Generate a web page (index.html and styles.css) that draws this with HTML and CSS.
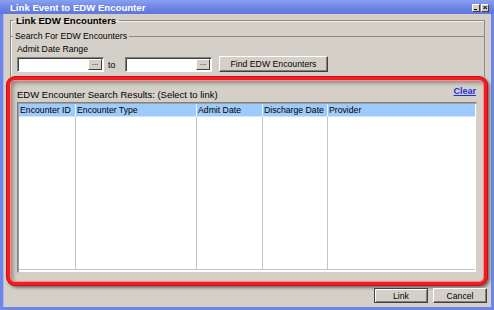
FILE: index.html
```html
<!DOCTYPE html>
<html lang="en">
<head>
  <meta charset="UTF-8" />
  <title>Link Event to EDW Encounter</title>
  <link rel="stylesheet" href="styles.css">
</head>
<body>
  <div class="window">
    <div class="titlebar">
      <span class="title">Link Event to EDW Encounter</span>
      <div class="title-btns">
        <span class="tbtn min"></span>
        <span class="tbtn close">&#215;</span>
      </div>
    </div>

    <fieldset class="group">
      <legend class="group-title">Link EDW Encounters</legend>
      <fieldset class="subgroup">
        <legend>Search For EDW Encounters</legend>
        <div class="field-label">Admit Date Range</div>
        <div class="search-row">
          <div class="date-input"><span class="dots">...</span></div>
          <span class="to">to</span>
          <div class="date-input"><span class="dots">...</span></div>
          <button class="btn find">Find EDW Encounters</button>
        </div>
      </fieldset>
    </fieldset>

    <div class="results">
      <div class="results-head">
        <span class="results-label">EDW Encounter Search Results: (Select to link)</span>
        <a class="clear" href="#">Clear</a>
      </div>
      <div class="grid">
        <div class="th">Encounter ID</div>
        <div class="th">Encounter Type</div>
        <div class="th">Admit Date</div>
        <div class="th">Discharge Date</div>
        <div class="th last">Provider</div>
        <div class="td"></div>
        <div class="td"></div>
        <div class="td"></div>
        <div class="td"></div>
        <div class="td last"></div>
      </div>
    </div>

    <div class="actions">
      <button class="btn default">Link</button>
      <button class="btn">Cancel</button>
    </div>
  </div>
</body>
</html>
```
FILE: styles.css
```css
* {
  box-sizing: border-box;
}
body {
  margin: 0;
  font-family: 'Liberation Sans', Arial, sans-serif;
  font-size: 8.7px;
  color: #000;
  background: #d4d0c8;
}
.window {
  width: 494px;
  height: 310px;
  background: #d4d0c8;
  border: 3px solid #6f86e6;
  border-top: none;
  box-shadow: inset 1px 0 0 #a9b8f2;
}
.titlebar {
  height: 14px;
  margin: 0 -3px;
  padding: 0 5px 0 10px;
  display: flex;
  align-items: center;
  justify-content: space-between;
  background: linear-gradient(#8aa0ee, #6a82e4 60%, #5e77dc);
}
.title {
  color: #fff;
  font-weight: bold;
  font-size: 9.6px;
}
.title-btns {
  display: flex;
  gap: 1px;
  margin-top: 1px;
}
.tbtn {
  width: 8px;
  height: 8px;
  background: #d4d0c8;
  border: 1px solid;
  border-color: #fff #404040 #404040 #fff;
  font-size: 8px;
  line-height: 5px;
  text-align: center;
  font-weight: bold;
  color: #000;
}
.tbtn.min {
  position: relative;
}
.tbtn.min::after {
  content: "";
  position: absolute;
  left: 1px;
  bottom: 1px;
  width: 3px;
  height: 1px;
  background: #000;
}
.group {
  margin: 0 6px 0 7px;
  padding: 0;
  height: 63px;
  border: 1px solid #8a8a8a;
  border-bottom: none;
  box-shadow: inset 1px 1px 0 #f4f2ee;
}
.group-title {
  font-weight: bold;
  font-size: 9.6px;
  line-height: 10px;
  padding: 2px 3px 0;
  margin-left: 2px;
}
.subgroup {
  margin: 5px -1px 0 -1px;
  padding: 0 0 0 7px;
  border: none;
  border-top: 1px solid #8a8a8a;
}
.subgroup legend {
  line-height: 11px;
  padding: 0 2px;
  margin-left: -4px;
}
.field-label {
  line-height: 11px;
  margin-top: 2px;
}
.search-row {
  display: flex;
  align-items: flex-end;
  margin-top: 1px;
  height: 16px;
}
.date-input {
  width: 87px;
  height: 15px;
  background: #fff;
  border: 1px solid;
  border-color: #808080 #fff #fff #808080;
  box-shadow: inset 1px 1px 0 #404040;
  display: flex;
  justify-content: flex-end;
  padding: 1px;
}
.dots {
  width: 14px;
  height: 11px;
  background: #d4d0c8;
  border: 1px solid;
  border-color: #fff #404040 #404040 #fff;
  font-size: 8px;
  line-height: 5px;
  text-align: center;
}
.to {
  width: 21px;
  padding-left: 4px;
  line-height: 14px;
}
.btn {
  font-family: inherit;
  font-size: 8.7px;
  color: #000;
  background: #d4d0c8;
  border: 1px solid;
  border-color: #fff #404040 #404040 #fff;
  box-shadow: inset -1px -1px 0 #808080;
  padding: 0;
  height: 15px;
}
.find {
  width: 109px;
  height: 16px;
  margin-left: 7px;
}
.results {
  margin: 0 4px 0 4px;
  height: 208px;
  border: 3px solid #f41c22;
  border-radius: 8px;
  padding: 0 7px 9px 7px;
  background: #d4d0c8;
  box-shadow: 0 0 0 1px #c41016, 2px 2px 3px 1px rgba(0, 0, 0, 0.45), inset 0 0 0 1px #ff8a8e, inset 3px 3px 4px rgba(0, 0, 0, 0.35);
}
.results-head {
  height: 22px;
  display: flex;
  justify-content: space-between;
  align-items: flex-end;
  padding-bottom: 2px;
}
.results-label {
  font-size: 9.5px;
}
.clear {
  color: #1a2fd8;
  font-weight: bold;
  font-size: 9px;
  align-self: flex-start;
  margin-top: 6px;
  margin-right: 1px;
}
.grid {
  height: 171px;
  display: grid;
  grid-template-columns: 57px 121px 66px 65px 1fr;
  grid-template-rows: 13px 1fr;
  background: #fff;
  border: 1px solid;
  border-color: #808080 #d4d0c8 #d4d0c8 #808080;
  box-shadow: inset 1px 1px 0 #a0a0a0;
  padding: 1px 1px 2px 1px;
}
.th {
  background: #9fcbfb;
  border-right: 1px solid #e8f2fe;
  border-bottom: 1px solid #d0e4fa;
  padding-left: 1px;
  line-height: 12px;
  white-space: nowrap;
  overflow: hidden;
}
.td {
  border-right: 1px solid #c4c4c4;
  border-bottom: 1px solid #c4c4c4;
}
.th.last, .td.last {
  border-right: none;
}
.actions {
  display: flex;
  justify-content: flex-end;
  gap: 5px;
  margin-top: 3px;
  padding-right: 4px;
}
.actions .btn {
  width: 54px;
}
.actions .default {
  border-color: #404040;
  box-shadow: inset 1px 1px 0 #fff, inset -1px -1px 0 #808080;
}
```
